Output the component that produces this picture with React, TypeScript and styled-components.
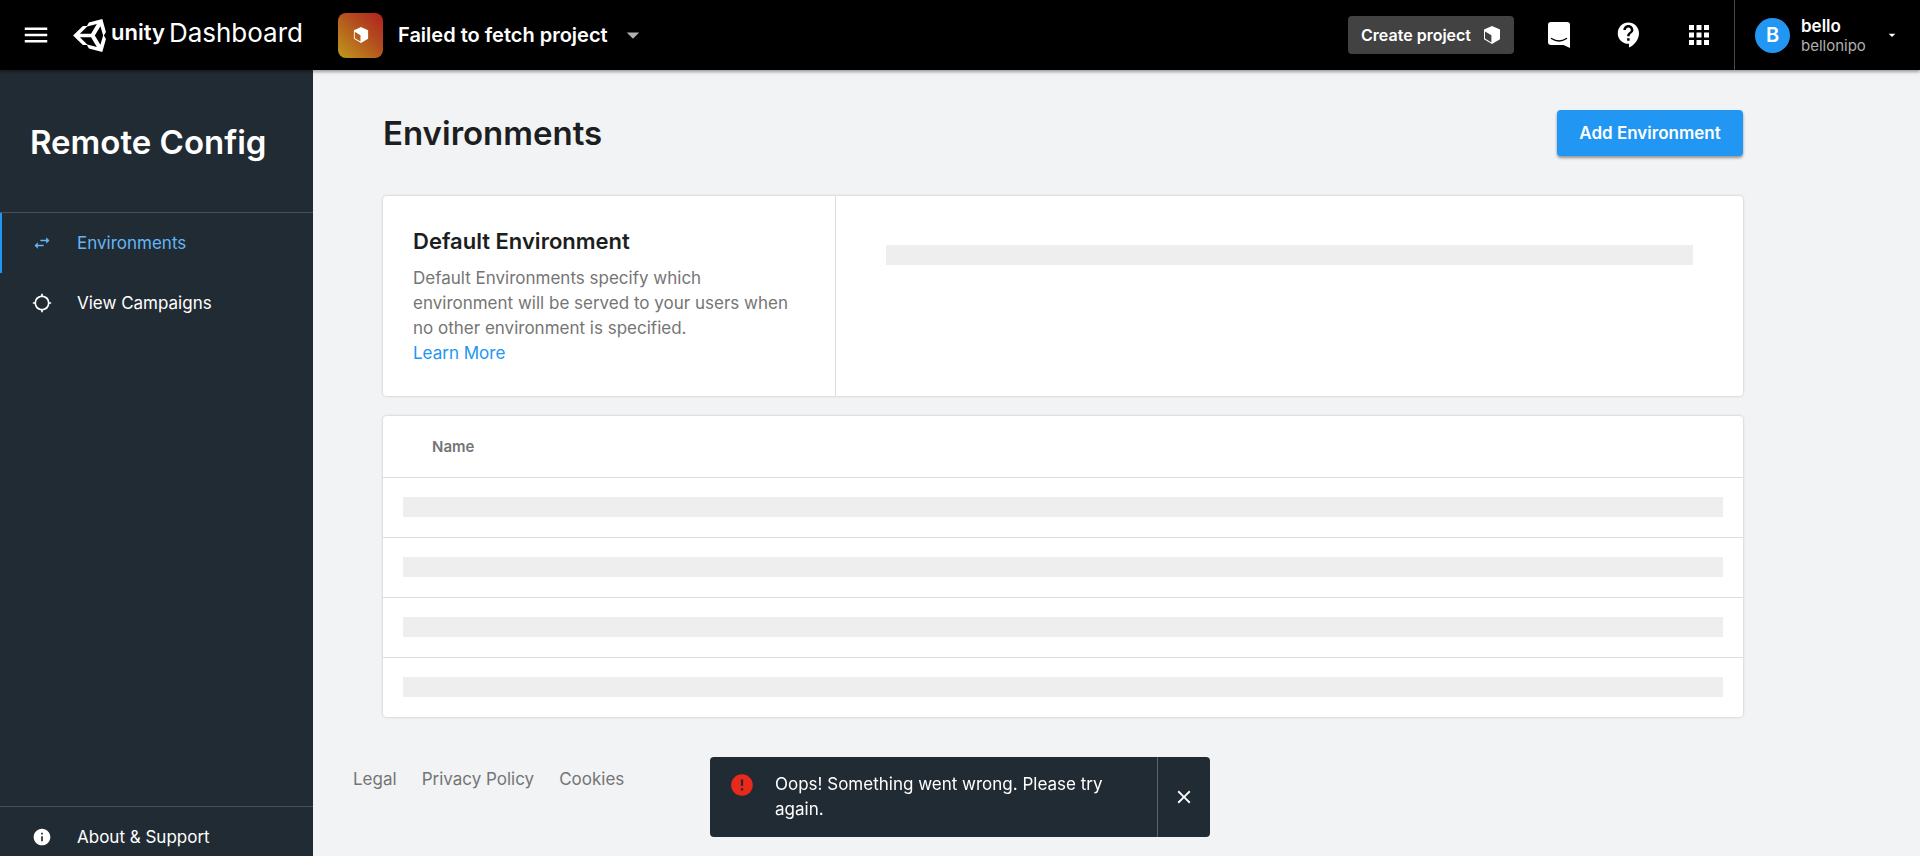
import React from "react";
import styled, { createGlobalStyle } from "styled-components";
import {
  MdApps,
  MdArrowDropDown,
  MdClose,
  MdContactSupport,
  MdError,
  MdInfo,
  MdLocationSearching,
  MdMenu,
  MdSwapHoriz,
} from "react-icons/md";

const GlobalStyle = createGlobalStyle`
  *, *::before, *::after { box-sizing: border-box; }
  body {
    margin: 0;
    font-family: Inter, "Liberation Sans", sans-serif;
    font-size: 17px;
    line-height: 25px;
    color: #1c1e21;
    background: #f1f3f5;
  }
  button {
    font: inherit;
    border: 0;
    padding: 0;
    color: inherit;
    background: none;
    cursor: pointer;
  }
  a { color: inherit; text-decoration: none; }
  h1, h2, p { margin: 0; }
  svg { display: block; flex: none; }
`;

const Shell = styled.div`
  display: flex;
  flex-direction: column;
  height: 100vh;
  overflow: hidden;
`;

const TopBar = styled.header`
  position: relative;
  z-index: 1;
  flex: none;
  display: flex;
  align-items: center;
  height: 70px;
  color: #fff;
  background: #000;
  box-shadow: 0 2px 3px rgba(0, 0, 0, 0.35);
`;

const MenuButton = styled.button`
  margin: 0 22px 0 21px;
`;

const Brand = styled.a`
  display: flex;
  align-items: center;
  width: 265px;
  font-size: 26px;
`;

const Wordmark = styled.span`
  display: flex;
  gap: 4px;
  margin-left: 5px;
  padding-bottom: 5px;
`;

const BrandName = styled.strong`
  font-weight: 600;
  font-size: 22px;
`;

const ProjectPicker = styled.button`
  display: flex;
  align-items: center;
  font-size: 20px;
  font-weight: 600;
`;

const ProjectTile = styled.span`
  display: flex;
  align-items: center;
  justify-content: center;
  width: 45px;
  height: 45px;
  margin-right: 15px;
  border-radius: 8px;
  background: linear-gradient(45deg, #c09a1c, #b4521e 55%, #b0201f);
`;

const PickerCaret = styled(MdArrowDropDown)`
  margin-left: 10px;
  color: #b0b0b0;
`;

const Actions = styled.div`
  display: flex;
  align-items: center;
  height: 100%;
  margin-left: auto;
`;

const CreateButton = styled.button`
  display: flex;
  align-items: center;
  gap: 12px;
  height: 38px;
  margin-right: 10px;
  padding: 0 13px;
  border-radius: 4px;
  font-size: 16px;
  font-weight: 600;
  background: #424242;
`;

const IconButton = styled.button`
  display: flex;
  justify-content: center;
  width: 70px;
`;

const Account = styled.button`
  display: flex;
  align-items: center;
  gap: 11px;
  width: 186px;
  height: 100%;
  padding: 0 20px;
  border-left: 1px solid #4a4a4a;
  text-align: left;
`;

const Avatar = styled.span`
  flex: none;
  width: 35px;
  border-radius: 50%;
  font-size: 20px;
  font-weight: 600;
  line-height: 35px;
  text-align: center;
  background: #2196f3;
`;

const AccountText = styled.span`
  flex: 1;
  display: flex;
  flex-direction: column;
  padding-top: 2px;
  font-size: 15px;
  line-height: 19px;
  color: #b0b0b0;
`;

const AccountName = styled.span`
  font-size: 17px;
  font-weight: 600;
  color: #fff;
`;

const Body = styled.div`
  flex: 1;
  display: flex;
  min-height: 0;
`;

const Sidebar = styled.aside`
  flex: none;
  display: flex;
  flex-direction: column;
  width: 313px;
  color: #fff;
  background: #212b33;
`;

const SidebarTitle = styled.h2`
  padding: 50px 30px 48px;
  font-size: 33px;
  font-weight: 600;
  line-height: 44px;
`;

const NavList = styled.nav<{ $bottom?: boolean }>`
  display: flex;
  flex-direction: column;
  margin-top: ${(p) => (p.$bottom ? "auto" : 0)};
  border-top: 1px solid #475058;
  ${(p) => p.$bottom && "height: 50px; flex: none; overflow: hidden;"}
`;

const NavItem = styled.a<{ $active?: boolean }>`
  flex: none;
  display: flex;
  align-items: center;
  gap: 25px;
  height: 60px;
  padding-left: 30px;
  border-left: 2px solid ${(p) => (p.$active ? "#2196f3" : "transparent")};
  color: ${(p) => (p.$active ? "#64b5f6" : "#fff")};
`;

const Main = styled.main`
  flex: 1;
  display: flex;
  flex-direction: column;
  min-width: 0;
`;

const Content = styled.div`
  display: flex;
  flex-direction: column;
  gap: 20px;
  max-width: 1500px;
  padding: 40px 70px 0;
`;

const PageHead = styled.div`
  display: flex;
  align-items: center;
  justify-content: space-between;
  margin-bottom: 20px;
`;

const PageTitle = styled.h1`
  font-size: 33px;
  font-weight: 600;
  line-height: 46px;
`;

const PrimaryButton = styled.button`
  min-width: 186px;
  height: 46px;
  padding: 0 20px;
  border-radius: 4px;
  font-weight: 600;
  color: #fff;
  background: #2196f3;
  box-shadow: 0 2px 3px rgba(0, 0, 0, 0.4);
`;

const Card = styled.section<{ $split?: boolean }>`
  display: grid;
  grid-template-columns: ${(p) => (p.$split ? "1fr 2fr" : "1fr")};
  border-radius: 4px;
  background: #fff;
  box-shadow: 0 0 2px 1px rgba(0, 0, 0, 0.1);
`;

const CardIntro = styled.div`
  padding: 29px 30px 30px;
  border-right: 1px solid #dcdfe1;
  color: #757575;
`;

const CardTitle = styled.h2`
  margin-bottom: 8px;
  font-size: 22px;
  font-weight: 600;
  line-height: 33px;
  color: #1c1e21;
`;

const CardBody = styled.div`
  padding: 49px 50px;
`;

const TextLink = styled.a`
  color: #2196f3;
`;

const Skeleton = styled.div`
  height: 20px;
  background: #eee;
`;

const Table = styled.table`
  width: 100%;
  border-spacing: 0;
`;

const HeadCell = styled.th`
  height: 61px;
  padding: 0 49px;
  font-size: 15px;
  font-weight: 600;
  text-align: left;
  color: #757575;
`;

const Cell = styled.td`
  padding: 19px 20px 20px;
  border-top: 1px solid #dcdfe1;
`;

const Footer = styled.footer`
  display: flex;
  gap: 25px;
  padding: 50px 40px;
  color: #757575;
`;

const Toast = styled.div`
  position: fixed;
  z-index: 2;
  bottom: 19px;
  left: 50%;
  display: flex;
  width: 500px;
  margin-left: -250px;
  border-radius: 4px;
  color: #fff;
  background: #212b33;
`;

const ToastMessage = styled.div`
  flex: 1;
  display: flex;
  gap: 20px;
  padding: 15px 35px 15px 19px;
`;

const ErrorIcon = styled(MdError)`
  color: #e8291c;
`;

const ToastClose = styled.button`
  display: flex;
  align-items: center;
  justify-content: center;
  width: 53px;
  border-left: 1px solid #59626a;
`;

const UnityMark = () => (
  <svg width="33" height="33" viewBox="15 14 484 484" aria-hidden="true">
    <path
      fillRule="evenodd"
      fill="currentColor"
      d="M498 206 445 15 248 66 219 117 160 116 16 256 160 396 219 395 248 446 445 497 498 306 468 256ZM224 124 365 89 280 232H116ZM224 388 116 280H280L365 423ZM417 119 457 256 417 393 335 256Z"
    />
  </svg>
);

const CubeIcon = ({ size }: { size: number }) => (
  <svg width={size} height={size} viewBox="0 0 18 18" aria-hidden="true">
    <path
      fillRule="evenodd"
      fill="currentColor"
      d="M9 0 17 3.6V13.2L9 18 1 13.2V3.6ZM2 5.4V12.6L8.4 16.4V9.2Z"
    />
  </svg>
);

const ChatIcon = () => (
  <svg width="22" height="26" viewBox="0 0 22 26" aria-hidden="true">
    <path fill="currentColor" d="M3 0H19A3 3 0 0 1 22 3V26L15.5 23H3A3 3 0 0 1 0 20V3A3 3 0 0 1 3 0Z" />
    <path d="M3.5 16.5Q11 21.5 18.5 16.5" fill="none" stroke="#000" strokeWidth="1.4" strokeLinecap="round" />
  </svg>
);

const skeletonRows = [1, 2, 3, 4];

export default function App() {
  return (
    <Shell>
      <GlobalStyle />
      <TopBar>
        <MenuButton aria-label="Menu">
          <MdMenu size={30} />
        </MenuButton>
        <Brand href="#">
          <UnityMark />
          <Wordmark>
            <BrandName>unity</BrandName>
            <span>Dashboard</span>
          </Wordmark>
        </Brand>
        <ProjectPicker>
          <ProjectTile>
            <CubeIcon size={16} />
          </ProjectTile>
          Failed to fetch project
          <PickerCaret size={30} />
        </ProjectPicker>
        <Actions>
          <CreateButton>
            Create project
            <CubeIcon size={18} />
          </CreateButton>
          <IconButton aria-label="Messages">
            <ChatIcon />
          </IconButton>
          <IconButton aria-label="Help">
            <MdContactSupport size={30} />
          </IconButton>
          <IconButton aria-label="Apps">
            <MdApps size={30} />
          </IconButton>
          <Account>
            <Avatar>B</Avatar>
            <AccountText>
              <AccountName>bello</AccountName>
              bellonipo
            </AccountText>
            <MdArrowDropDown size={16} />
          </Account>
        </Actions>
      </TopBar>
      <Body>
        <Sidebar>
          <SidebarTitle>Remote Config</SidebarTitle>
          <NavList>
            <NavItem href="#" $active>
              <MdSwapHoriz size={20} />
              Environments
            </NavItem>
            <NavItem href="#">
              <MdLocationSearching size={20} />
              View Campaigns
            </NavItem>
          </NavList>
          <NavList $bottom>
            <NavItem href="#">
              <MdInfo size={20} />
              About &amp; Support
            </NavItem>
          </NavList>
        </Sidebar>
        <Main>
          <Content>
            <PageHead>
              <PageTitle>Environments</PageTitle>
              <PrimaryButton>Add Environment</PrimaryButton>
            </PageHead>
            <Card $split>
              <CardIntro>
                <CardTitle>Default Environment</CardTitle>
                <p>
                  Default Environments specify which environment will be served to your users when no other
                  environment is specified.
                </p>
                <TextLink href="#">Learn More</TextLink>
              </CardIntro>
              <CardBody>
                <Skeleton />
              </CardBody>
            </Card>
            <Card>
              <Table>
                <thead>
                  <tr>
                    <HeadCell scope="col">Name</HeadCell>
                  </tr>
                </thead>
                <tbody>
                  {skeletonRows.map((row) => (
                    <tr key={row}>
                      <Cell>
                        <Skeleton />
                      </Cell>
                    </tr>
                  ))}
                </tbody>
              </Table>
            </Card>
          </Content>
          <Footer>
            <a href="#">Legal</a>
            <a href="#">Privacy Policy</a>
            <a href="#">Cookies</a>
          </Footer>
        </Main>
      </Body>
      <Toast role="alert">
        <ToastMessage>
          <ErrorIcon size={26} />
          Oops! Something went wrong. Please try again.
        </ToastMessage>
        <ToastClose aria-label="Close">
          <MdClose size={22} />
        </ToastClose>
      </Toast>
    </Shell>
  );
}
